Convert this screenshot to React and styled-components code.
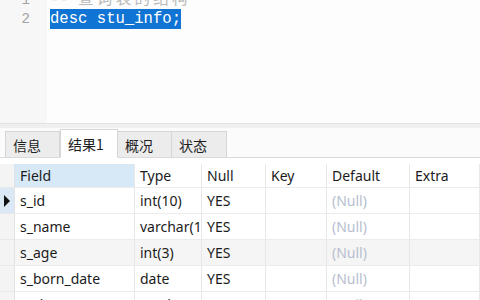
import React from "react";
import styled, { createGlobalStyle } from "styled-components";

const GlobalStyle = createGlobalStyle`
  html, body {
    margin: 0;
    padding: 0;
    background: #ffffff;
    overflow: hidden;
  }
  body {
    font-family: "Noto Sans", "Noto Sans CJK SC", sans-serif;
  }
`;

const Page = styled.div`
  width: 480px;
  height: 300px;
  overflow: hidden;
  display: flex;
  flex-direction: column;
  background: #ffffff;
`;

const Editor = styled.div`
  height: 123px;
  flex: none;
  display: flex;
  background: #fdfdfd;
  overflow: hidden;
`;

const Gutter = styled.div`
  width: 47px;
  flex: none;
  background: #f7f7f7;
  padding-right: 17px;
  box-sizing: border-box;
  margin-top: -9px;
  text-align: right;
  font-family: "Liberation Mono", "DejaVu Sans Mono", monospace;
  font-size: 14px;
  line-height: 18.5px;
  color: #a3a3a3;
`;

const Code = styled.div`
  flex: 1;
  padding-left: 3px;
  margin-top: -9px;
  font-family: "Liberation Mono", "Noto Sans CJK SC", monospace;
  font-size: 15.6px;
  line-height: 18.5px;
  color: #222;
  white-space: pre;
`;

const Comment = styled.span`
  color: #b9b9b9;
`;

const Wide = styled.span`
  letter-spacing: 3.2px;
`;

const Selected = styled.span`
  background: #0f74d4;
  color: #ffffff;
  padding: 1px 0;
`;

const Splitter = styled.div`
  height: 4px;
  flex: none;
  background: #efefef;
  border-top: 1px solid #e2e2e2;
`;

const TabBar = styled.div`
  height: 29px;
  flex: none;
  display: flex;
  align-items: flex-end;
  padding-left: 5px;
  background: #fbfbfb;
  border-bottom: 1px solid #dadada;
`;

const Tab = styled.div`
  width: ${(p) => p.w}px;
  height: ${(p) => (p.active ? 29 : 26)}px;
  box-sizing: border-box;
  display: flex;
  align-items: center;
  padding-left: 7px;
  font-family: "Noto Sans CJK SC", sans-serif;
  font-size: 14px;
  color: #1e1e1e;
  background: ${(p) => (p.active ? "#ffffff" : "#ececec")};
  border: 1px solid #d6d6d6;
  border-bottom: ${(p) => (p.active ? "1px solid #ffffff" : "none")};
  border-left: ${(p) => (p.first || p.active ? "1px solid #d6d6d6" : "none")};
  margin-bottom: ${(p) => (p.active ? -1 : 0)}px;
  position: relative;
`;

const Grid = styled.div`
  margin-top: 6px;
  display: grid;
  grid-template-columns: 15px 120px 67px 64px 61px 83px 1fr;
  grid-auto-rows: 26px;
  grid-template-rows: 24px;
`;

const Cell = styled.div`
  box-sizing: border-box;
  display: flex;
  align-items: center;
  padding-left: 5px;
  font-size: 14px;
  color: ${(p) => (p.nul ? "#b7bed0" : "#1b1b1b")};
  background: ${(p) => p.bg || "transparent"};
  border-right: 1px solid #e8e8e8;
  border-bottom: 1px solid #ececec;
  white-space: nowrap;
  overflow: hidden;
`;

const Indicator = styled.div`
  box-sizing: border-box;
  display: flex;
  align-items: center;
  justify-content: center;
  background: ${(p) => (p.current ? "#dbe8f5" : "#f4f4f4")};
  border-right: 1px solid #e2e2e2;
  border-bottom: 1px solid #e8e8e8;
`;

const columns = ["Field", "Type", "Null", "Key", "Default", "Extra"];

const rows = [
  ["s_id", "int(10)", "YES", "", "(Null)", ""],
  ["s_name", "varchar(10)", "YES", "", "(Null)", ""],
  ["s_age", "int(3)", "YES", "", "(Null)", ""],
  ["s_born_date", "date", "YES", "", "(Null)", ""],
  ["s_class", "varchar(10)", "YES", "", "(Null)", ""],
];

const tabs = [
  { label: "信息", w: 55 },
  { label: "结果1", w: 58, active: true },
  { label: "概况", w: 54 },
  { label: "状态", w: 55 },
];

const Arrow = () => (
  <svg width="8" height="12" viewBox="0 0 8 12">
    <polygon points="1,0 7,6 1,12" fill="#111" />
  </svg>
);

export default function App() {
  return (
    <Page>
      <GlobalStyle />
      <Editor>
        <Gutter>
          <div>1</div>
          <div>2</div>
        </Gutter>
        <Code>
          <div>
            <Comment>
              -- <Wide>查询表的结构</Wide>
            </Comment>
          </div>
          <div>
            <Selected>desc stu_info;</Selected>
          </div>
        </Code>
      </Editor>
      <Splitter />
      <TabBar>
        {tabs.map((t, i) => (
          <Tab key={t.label} w={t.w} active={t.active} first={i === 0}>
            {t.label}
          </Tab>
        ))}
      </TabBar>
      <Grid>
        <Indicator />
        {columns.map((c) => (
          <Cell key={c} bg={c === "Field" ? "#d7e8f7" : "#ffffff"}>
            {c}
          </Cell>
        ))}
        {rows.map((r, ri) => (
          <React.Fragment key={r[0]}>
            <Indicator current={ri === 0}>{ri === 0 && <Arrow />}</Indicator>
            {r.map((v, ci) => (
              <Cell
                key={ci}
                nul={v === "(Null)"}
                bg={ri === 2 ? "#f5f5f5" : "#ffffff"}
              >
                {v}
              </Cell>
            ))}
          </React.Fragment>
        ))}
      </Grid>
    </Page>
  );
}
